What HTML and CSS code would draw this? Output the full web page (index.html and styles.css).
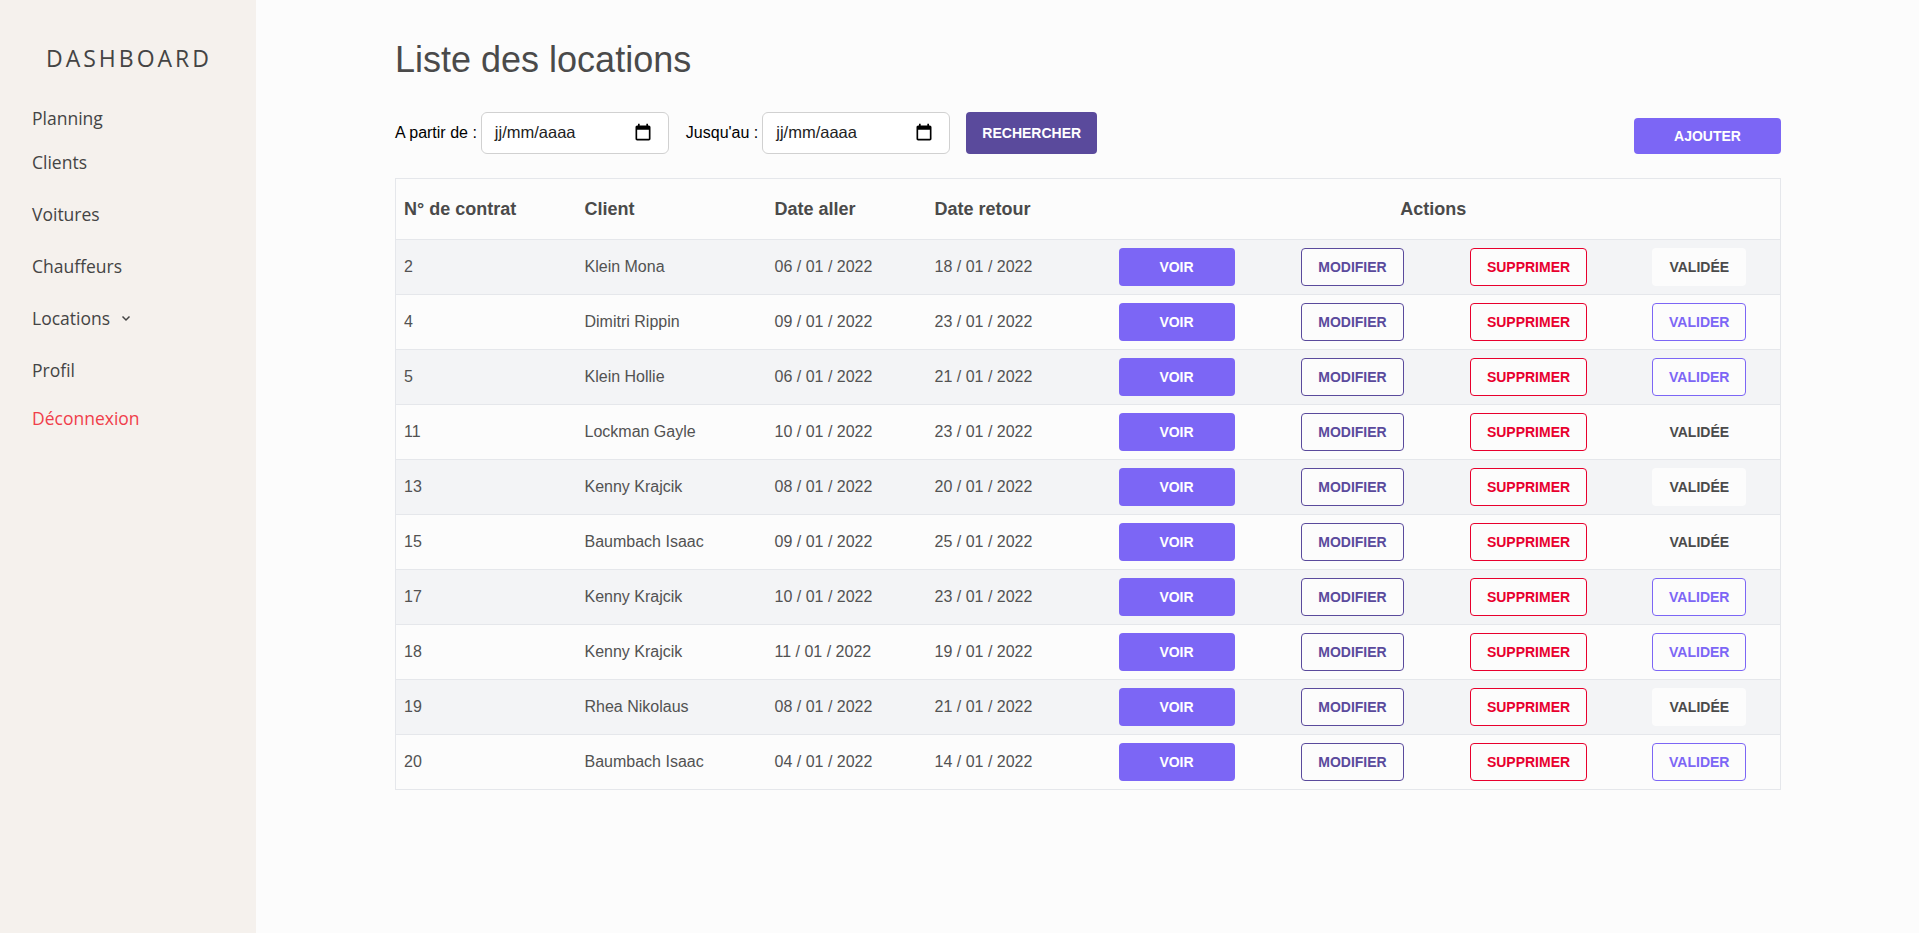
FILE: index.html
```html
<!DOCTYPE html>
<html lang="fr">

<head>
    <meta charset="UTF-8">
    <meta name="viewport" content="width=device-width, initial-scale=1.0">
    <title>Liste des locations</title>
    <link rel="stylesheet" href="styles.css">
</head>

<body>
    <div class="layout">
        <aside class="sidebar">
            <h1 class="brand">DASHBOARD</h1>
            <nav class="menu">
                <a href="#" class="menu-item first">Planning</a>
                <a href="#" class="menu-item">Clients</a>
                <a href="#" class="menu-item">Voitures</a>
                <a href="#" class="menu-item">Chauffeurs</a>
                <a href="#" class="menu-item">Locations
                    <svg class="chevron" viewBox="0 0 10 10"><path d="M1.5 3.5 5 7l3.5-3.5" /></svg>
                </a>
                <a href="#" class="menu-item">Profil</a>
                <a href="#" class="menu-item logout">Déconnexion</a>
            </nav>
        </aside>

        <main class="content">
            <h2 class="title">Liste des locations</h2>

            <div class="toolbar">
                <form class="filters">
                    <label class="filter-label">A partir de :</label>
                    <div class="date-field">
                        <span class="date-text">jj/mm/aaaa</span>
                        <svg class="calendar" viewBox="0 0 24 24"><path d="M19 3h-1V1h-2v2H8V1H6v2H5c-1.1 0-2 .9-2 2v14c0 1.1.9 2 2 2h14c1.1 0 2-.9 2-2V5c0-1.1-.9-2-2-2zm0 16H5V8h14v11z" /></svg>
                    </div>
                    <label class="filter-label second-label">Jusqu'au :</label>
                    <div class="date-field">
                        <span class="date-text">jj/mm/aaaa</span>
                        <svg class="calendar" viewBox="0 0 24 24"><path d="M19 3h-1V1h-2v2H8V1H6v2H5c-1.1 0-2 .9-2 2v14c0 1.1.9 2 2 2h14c1.1 0 2-.9 2-2V5c0-1.1-.9-2-2-2zm0 16H5V8h14v11z" /></svg>
                    </div>
                    <button type="button" class="btn btn-search">RECHERCHER</button>
                </form>
                <button type="button" class="btn btn-add">AJOUTER</button>
            </div>

            <table class="bookings">
                <colgroup>
                    <col class="col-num">
                    <col class="col-client">
                    <col class="col-go">
                    <col class="col-back">
                    <col class="col-see">
                    <col class="col-edit">
                    <col class="col-del">
                    <col class="col-ok">
                </colgroup>
                <thead>
                    <tr>
                        <th>N° de contrat</th>
                        <th>Client</th>
                        <th>Date aller</th>
                        <th>Date retour</th>
                        <th colspan="4" class="th-actions">Actions</th>
                    </tr>
                </thead>
                <tbody>
                    <tr>
                        <td>2</td><td>Klein Mona</td><td>06 / 01 / 2022</td><td>18 / 01 / 2022</td>
                        <td class="action"><a class="btn btn-see">VOIR</a></td>
                        <td class="action"><a class="btn btn-edit">MODIFIER</a></td>
                        <td class="action"><a class="btn btn-del">SUPPRIMER</a></td>
                        <td class="action"><a class="btn btn-done">VALIDÉE</a></td>
                    </tr>
                    <tr>
                        <td>4</td><td>Dimitri Rippin</td><td>09 / 01 / 2022</td><td>23 / 01 / 2022</td>
                        <td class="action"><a class="btn btn-see">VOIR</a></td>
                        <td class="action"><a class="btn btn-edit">MODIFIER</a></td>
                        <td class="action"><a class="btn btn-del">SUPPRIMER</a></td>
                        <td class="action"><a class="btn btn-ok">VALIDER</a></td>
                    </tr>
                    <tr>
                        <td>5</td><td>Klein Hollie</td><td>06 / 01 / 2022</td><td>21 / 01 / 2022</td>
                        <td class="action"><a class="btn btn-see">VOIR</a></td>
                        <td class="action"><a class="btn btn-edit">MODIFIER</a></td>
                        <td class="action"><a class="btn btn-del">SUPPRIMER</a></td>
                        <td class="action"><a class="btn btn-ok">VALIDER</a></td>
                    </tr>
                    <tr>
                        <td>11</td><td>Lockman Gayle</td><td>10 / 01 / 2022</td><td>23 / 01 / 2022</td>
                        <td class="action"><a class="btn btn-see">VOIR</a></td>
                        <td class="action"><a class="btn btn-edit">MODIFIER</a></td>
                        <td class="action"><a class="btn btn-del">SUPPRIMER</a></td>
                        <td class="action"><a class="btn btn-done">VALIDÉE</a></td>
                    </tr>
                    <tr>
                        <td>13</td><td>Kenny Krajcik</td><td>08 / 01 / 2022</td><td>20 / 01 / 2022</td>
                        <td class="action"><a class="btn btn-see">VOIR</a></td>
                        <td class="action"><a class="btn btn-edit">MODIFIER</a></td>
                        <td class="action"><a class="btn btn-del">SUPPRIMER</a></td>
                        <td class="action"><a class="btn btn-done">VALIDÉE</a></td>
                    </tr>
                    <tr>
                        <td>15</td><td>Baumbach Isaac</td><td>09 / 01 / 2022</td><td>25 / 01 / 2022</td>
                        <td class="action"><a class="btn btn-see">VOIR</a></td>
                        <td class="action"><a class="btn btn-edit">MODIFIER</a></td>
                        <td class="action"><a class="btn btn-del">SUPPRIMER</a></td>
                        <td class="action"><a class="btn btn-done">VALIDÉE</a></td>
                    </tr>
                    <tr>
                        <td>17</td><td>Kenny Krajcik</td><td>10 / 01 / 2022</td><td>23 / 01 / 2022</td>
                        <td class="action"><a class="btn btn-see">VOIR</a></td>
                        <td class="action"><a class="btn btn-edit">MODIFIER</a></td>
                        <td class="action"><a class="btn btn-del">SUPPRIMER</a></td>
                        <td class="action"><a class="btn btn-ok">VALIDER</a></td>
                    </tr>
                    <tr>
                        <td>18</td><td>Kenny Krajcik</td><td>11 / 01 / 2022</td><td>19 / 01 / 2022</td>
                        <td class="action"><a class="btn btn-see">VOIR</a></td>
                        <td class="action"><a class="btn btn-edit">MODIFIER</a></td>
                        <td class="action"><a class="btn btn-del">SUPPRIMER</a></td>
                        <td class="action"><a class="btn btn-ok">VALIDER</a></td>
                    </tr>
                    <tr>
                        <td>19</td><td>Rhea Nikolaus</td><td>08 / 01 / 2022</td><td>21 / 01 / 2022</td>
                        <td class="action"><a class="btn btn-see">VOIR</a></td>
                        <td class="action"><a class="btn btn-edit">MODIFIER</a></td>
                        <td class="action"><a class="btn btn-del">SUPPRIMER</a></td>
                        <td class="action"><a class="btn btn-done">VALIDÉE</a></td>
                    </tr>
                    <tr>
                        <td>20</td><td>Baumbach Isaac</td><td>04 / 01 / 2022</td><td>14 / 01 / 2022</td>
                        <td class="action"><a class="btn btn-see">VOIR</a></td>
                        <td class="action"><a class="btn btn-edit">MODIFIER</a></td>
                        <td class="action"><a class="btn btn-del">SUPPRIMER</a></td>
                        <td class="action"><a class="btn btn-ok">VALIDER</a></td>
                    </tr>
                </tbody>
            </table>
        </main>
    </div>
</body>

</html>
```

FILE: styles.css
```css
* {
    margin: 0;
    padding: 0;
    box-sizing: border-box;
}

body {
    height: 933px;
    overflow: hidden;
    background-color: #fcfcfc;
    color: #4a4a4a;
    font-family: "Liberation Sans", Arial, sans-serif;
}

.layout {
    display: flex;
    height: 100%;
}

/* sidebar */
.sidebar {
    width: 256px;
    flex-shrink: 0;
    background-color: #f5f1ed;
    padding: 43px 0 0 32px;
    font-family: "Open Sans", sans-serif;
}

.brand {
    margin-left: 14px;
    font-size: 23px;
    font-weight: 500;
    line-height: 30px;
    letter-spacing: 3px;
    color: #444444;
}

.menu {
    display: flex;
    flex-direction: column;
    margin-top: 27px;
}

.menu-item {
    display: flex;
    align-items: center;
    height: 52px;
    font-size: 17.5px;
    font-weight: 500;
    color: #444444;
    text-decoration: none;
}

.menu-item.first {
    height: 36px;
}

.menu-item.logout {
    height: 44px;
    color: #f03e4a;
}

.chevron {
    width: 10px;
    height: 10px;
    margin-left: 11px;
    fill: none;
    stroke: #444444;
    stroke-width: 1.5;
}

/* main */
.content {
    flex: 1;
    padding: 37px 139px 0 139px;
}

.title {
    font-size: 36px;
    font-weight: 400;
    line-height: 46px;
    color: #4a4a4a;
}

.toolbar {
    display: flex;
    justify-content: space-between;
    align-items: flex-end;
    margin-top: 29px;
}

.filters {
    display: flex;
    align-items: center;
}

.filter-label {
    font-size: 16px;
    color: #000000;
    margin-right: 4px;
}

.second-label {
    margin-left: 17px;
}

.date-field {
    display: flex;
    align-items: center;
    justify-content: space-between;
    width: 188px;
    height: 42px;
    padding: 0 15px 0 13px;
    background-color: #ffffff;
    border: 1px solid #d1d1d1;
    border-radius: 6px;
    font-size: 16.5px;
    line-height: 20px;
    color: #222222;
}

.date-text {
    margin-bottom: 2px;
}

.calendar {
    width: 20px;
    height: 20px;
    fill: #000000;
}

.btn {
    display: inline-flex;
    align-items: center;
    justify-content: center;
    height: 38px;
    border: 1px solid transparent;
    border-radius: 4px;
    font-family: inherit;
    font-size: 14px;
    font-weight: 700;
    cursor: pointer;
}

.btn-search {
    width: 131px;
    height: 42px;
    margin-left: 16px;
    background-color: #5a4a9c;
    color: #ffffff;
}

.btn-add {
    width: 147px;
    height: 36px;
    background-color: #7c66f5;
    color: #ffffff;
}

/* table */
.bookings {
    width: 100%;
    margin-top: 24px;
    table-layout: fixed;
    border-collapse: collapse;
    border: 1px solid #e5e7eb;
}

.col-num { width: 181px; }
.col-client { width: 190px; }
.col-go { width: 160px; }
.col-back { width: 160px; }
.col-see { width: 180px; }
.col-edit { width: 172px; }
.col-del { width: 180px; }
.col-ok { width: 162px; }

.bookings th {
    height: 61px;
    padding: 0 8px;
    text-align: left;
    font-size: 18px;
    font-weight: 700;
    color: #4a4a4a;
}

.bookings .th-actions {
    text-align: center;
}

.bookings td {
    height: 55px;
    padding: 0 8px;
    border-top: 1px solid #e5e7eb;
    font-size: 16px;
    color: #525252;
}

.bookings tbody tr:nth-child(odd) {
    background-color: #f3f4f6;
}

.bookings .action {
    text-align: center;
}

.btn-see {
    width: 116px;
    background-color: #7c66f5;
    color: #ffffff;
}

.btn-edit {
    width: 103px;
    background-color: #fcfcfc;
    border-color: #5a4a9c;
    color: #5a4a9c;
}

.btn-del {
    width: 117px;
    background-color: #fcfcfc;
    border-color: #e8002d;
    color: #e8002d;
}

.btn-ok {
    width: 94px;
    background-color: #fcfcfc;
    border-color: #7c66f5;
    color: #7c66f5;
}

.btn-done {
    width: 94px;
    background-color: #fcfcfc;
    color: #4a4a4a;
}
```
